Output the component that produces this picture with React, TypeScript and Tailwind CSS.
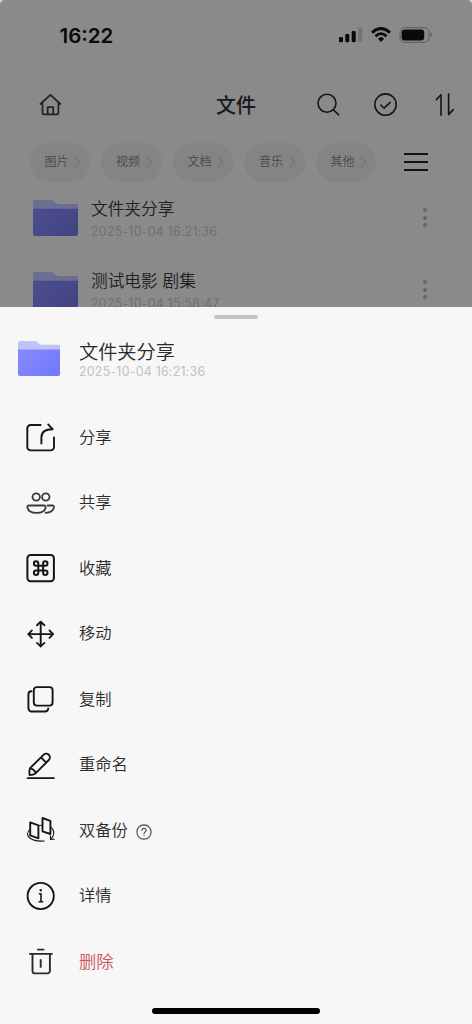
import type { ReactNode } from "react";

const filters = ['图片', '视频', '文档', '音乐', '其他']

const files = [
    { name: '文件夹分享', date: '2025-10-04 16:21:36' },
    { name: '测试电影 剧集', date: '2025-10-04 15:58:47' },
]

const Icon = (props: { children: ReactNode, color?: string, width?: number }) => {
    const { children, color = '#161616', width = 1.9 } = props
    return (
        <svg width="30" height="30" viewBox="0 0 30 30" fill="none" stroke={color} strokeWidth={width} strokeLinecap="round" strokeLinejoin="round" className="shrink-0">
            {children}
        </svg>
    )
}

const ShareIcon = () => (
    <Icon>
        <path d="M14.6 3H4.6a3.3 3.3 0 0 0-3.3 3.3v18.8a3.3 3.3 0 0 0 3.3 3.3h20.1a3.3 3.3 0 0 0 3.3-3.3v-9.6" />
        <path d="M15.4 21.5v-6c0-5 3.6-8.3 11.2-8.3L22.2 2.4" />
    </Icon>
)

const PeopleIcon = () => (
    <Icon color="#3a3a3a" width={1.8}>
        <circle cx="10.2" cy="9" r="3.7" />
        <circle cx="19.8" cy="9" r="3.7" />
        <path d="M3 17.5h15.2c1 0 1.6.7 1.5 1.7-.5 3.9-4.2 5.7-9.1 5.7s-8.7-1.9-9.2-5.7c-.1-1 .6-1.7 1.6-1.7Z" />
        <path d="M21.7 17.5h4.8c1 0 1.6.7 1.5 1.7-.5 3.6-3.6 5.4-8.3 5.7" />
    </Icon>
)

const CollectIcon = () => (
    <Icon>
        <rect x="1.4" y="2" width="26.5" height="26.3" rx="3.2" strokeWidth="2" />
        <path d="M12.3 12.7v-2.2a2.2 2.2 0 1 0-2.2 2.2h9.2a2.2 2.2 0 1 0-2.2-2.2v9.2a2.2 2.2 0 1 0 2.2-2.2h-9.2a2.2 2.2 0 1 0 2.2 2.2Z" strokeWidth="2" />
    </Icon>
)

const MoveIcon = () => (
    <Icon>
        <path d="M14.7 3v24.2M2.6 15.1h24.2" />
        <path d="M11 6.3 14.7 2.8l3.7 3.5M11 23.9l3.7 3.5 3.7-3.5M5.9 11.4 2.4 15.1l3.5 3.7M23.5 11.4l3.5 3.7-3.5 3.7" />
    </Icon>
)

const CopyIcon = () => (
    <Icon>
        <rect x="7.8" y="3.1" width="18.8" height="18.5" rx="3" />
        <path d="M5.5 7.3a3.2 3.2 0 0 0-3.1 3.2v13.8a3.2 3.2 0 0 0 3.2 3.2H19a3.2 3.2 0 0 0 3.2-3" />
    </Icon>
)

const RenameIcon = () => (
    <Icon>
        <path d="M1.6 28.1h26.3" />
        <path d="m4.1 18.2 13.4-13.4a3.7 3.7 0 0 1 5.3 5.2L9.8 23.2c-1.5 1.2-4 1.9-6.2 1.9-.3-2.3-.4-5 .5-6.9ZM15 7.4l5.2 5.3M4.2 18.2c2.2.4 5.1 2.6 5.5 5" />
    </Icon>
)

const BackupIcon = () => (
    <Icon>
        <path d="M4.2 7.4v13l8.2 2.9V10.3ZM16.5 3v13.3l7.9 2.7V5.9Z" />
        <path d="M12.6 10.5l3.7-.3" strokeWidth="1" />
        <path d="M3.8 14.6C.6 17.1.7 20.8 4.2 23.3c3 2.2 8.5 3.2 14 2.7M25 12.4c4 3.2 3.5 8.6-.2 11.5M24.4 20.8v3.6l3.8-.2" strokeWidth="1.1" />
    </Icon>
)

const InfoIcon = () => (
    <Icon>
        <circle cx="14.7" cy="15" r="13.1" />
        <path d="M12.8 12.7h2.2v7.9M12.6 20.8h4.6" strokeWidth="1.6" strokeLinecap="butt" />
        <circle cx="14.7" cy="9.3" r=".6" strokeWidth="1.2" />
    </Icon>
)

const TrashIcon = () => (
    <Icon color="#2a2a2a">
        <path d="M11.9 3.6h5.6M3.9 7.9h22M6.5 8v16.9a2.5 2.5 0 0 0 2.5 2.5h12.4a2.5 2.5 0 0 0 2.5-2.5V8M14.7 14v6.9" />
    </Icon>
)

const actions = [
    { label: '分享', icon: <ShareIcon /> },
    { label: '共享', icon: <PeopleIcon /> },
    { label: '收藏', icon: <CollectIcon /> },
    { label: '移动', icon: <MoveIcon /> },
    { label: '复制', icon: <CopyIcon /> },
    { label: '重命名', icon: <RenameIcon /> },
    { label: '双备份', icon: <BackupIcon />, help: true },
    { label: '详情', icon: <InfoIcon /> },
    { label: '删除', icon: <TrashIcon />, danger: true },
]

const Folder = (props: { back: string, front: string, side: string, id: string, className: string }) => {
    const { back, front, side, id, className } = props
    return (
        <svg viewBox="0 0 45 37" preserveAspectRatio="none" className={className}>
            <defs>
                <linearGradient id={id} x1="0" y1="0" x2="1" y2=".6">
                    <stop offset="0" stopColor={side} />
                    <stop offset="1" stopColor={front} />
                </linearGradient>
            </defs>
            <path d="M0 2Q0 0 2 0H17.5Q19.5 0 21 1.4L23 3.2Q24 4 26 4H44Q45 4 45 5V20H0Z" fill={back} />
            <path d="M0 9H45V35Q45 37 43 37H2Q0 37 0 35Z" fill={`url(#${id})`} />
        </svg>
    )
}

const StatusBar = () => {
    return (
        <div className="flex h-[70px] items-center justify-between pl-[59.5px] pr-[39px]">
            <span className="pt-0.5 text-[20.5px] font-semibold leading-none text-[#0a0a0a]">16:22</span>
            <div className="flex items-center text-[#0a0a0a]">
                <svg width="24" height="16" viewBox="0 0 24 16" fill="currentColor">
                    <rect x="0" y="10" width="4" height="5.3" rx="1.2" />
                    <rect x="6.3" y="7" width="4" height="8.3" rx="1.2" />
                    <rect x="12.7" y="4" width="4" height="11.3" rx="1.2" />
                    <rect x="19.2" y=".6" width="4" height="14.7" rx="1.2" fill="#747474" />
                </svg>
                <svg width="20" height="16" viewBox="0 0 20 16" fill="none" stroke="currentColor" strokeWidth="2.8" className="ml-2">
                    <path d="M1 5.6Q10-2.5 19 5.6M4.4 9.2Q10 4 15.6 9.2" />
                    <path d="M6.9 11.7Q10 9 13.1 11.7L10 15Z" fill="currentColor" stroke="none" />
                </svg>
                <svg width="34" height="16" viewBox="0 0 34 16" className="ml-2">
                    <rect x="1" y=".7" width="29" height="14.6" rx="4.6" fill="none" stroke="#5c5c5c" />
                    <rect x="2.6" y="2.4" width="22.6" height="11.2" rx="3.3" fill="currentColor" />
                    <path d="M31.5 5.5q3 2.2 0 4.8Z" fill="#5c5c5c" />
                </svg>
            </div>
        </div>
    )
}

const Header = () => {
    return (
        <div className="grid h-[70px] grid-cols-[177px_40px_1fr] items-center pl-[39px] pr-[17px]">
            <svg width="24" height="24" viewBox="0 0 24 24" fill="none" stroke="#242424" strokeWidth="1.8" strokeLinejoin="round" strokeLinecap="round">
                <path d="M1.4 11 11.4 1.9 21.4 11M3.5 9.4v10.4q0 1.6 1.6 1.6h12.7q1.6 0 1.6-1.6V9.4" />
                <path d="M8.7 21v-6.8h5.5V21" />
            </svg>
            <h1 className="whitespace-nowrap pt-0.5 text-[20px] font-medium leading-none text-[#191919]">文件</h1>
            <div className="flex items-center justify-end">
                <svg width="24" height="24" viewBox="0 0 24 24" fill="none" stroke="#151515" strokeWidth="1.6" strokeLinecap="round">
                    <circle cx="11" cy="10.2" r="9" />
                    <path d="m17.5 16.7 5.2 5.2" />
                </svg>
                <svg width="24" height="24" viewBox="0 0 24 24" fill="none" stroke="#151515" strokeWidth="1.6" strokeLinecap="round" className="ml-[34px]">
                    <circle cx="11.5" cy="11.6" r="10.7" />
                    <path d="m6.8 12 3.3 3.2 6.1-5.8" />
                </svg>
                <svg width="20" height="24" viewBox="0 0 20 24" fill="none" stroke="#151515" strokeWidth="1.6" strokeLinecap="round" strokeLinejoin="round" className="ml-[37px]">
                    <path d="M1.4 6.6 6 1.8v20.5M13.6.8v20.8l4.6-5" />
                </svg>
            </div>
        </div>
    )
}

export default function App() {
    return (
        <div className="h-[1024px] w-[472px] overflow-hidden bg-[#d0d0d0] font-['Inter','Noto_Sans_CJK_SC',sans-serif]">
            <div className="h-[307px] overflow-hidden rounded-t-[5px] bg-[#8a8a8a]">
                <StatusBar />
                <Header />
                <div className="flex h-[42px] items-center pl-[29.5px] pt-0.5">
                    <div className="flex gap-[11px]">
                        {filters.map((item) => (
                            <div key={item} className="flex h-[39px] w-[60.5px] items-center gap-[5.5px] rounded-full bg-[#848484] pl-[15px] text-[12px] font-[350] leading-none text-[#484848]">
                                {item}
                                <svg width="7" height="12" viewBox="0 0 7 12" fill="none" stroke="#747474" strokeWidth="1.1">
                                    <path d="m1 1 5 5-5 5" />
                                </svg>
                            </div>
                        ))}
                    </div>
                    <div className="ml-[28px] flex w-[24px] flex-col gap-[6px]">
                        <div className="h-[1.7px] bg-[#121212]" />
                        <div className="h-[1.7px] bg-[#121212]" />
                        <div className="h-[1.7px] bg-[#121212]" />
                    </div>
                </div>
                <div className="pt-[17px]">
                    {files.map((file, i) => (
                        <div key={file.name} className="flex h-[72px] items-start pl-[33px] pr-[45px]">
                            <Folder id={`row${i}`} back="#6b6d91" side="#4b4d90" front="#434583" className="mt-px h-[36px] w-[45px]" />
                            <div className="ml-[13px]">
                                <p className="pt-px text-[16.7px] font-[350] leading-[19px] text-[#202020]">{file.name}</p>
                                <p className="mt-[6px] text-[12.4px] leading-[14px] tracking-[0.24px] text-[#707070]">{file.date}</p>
                            </div>
                            <div className="ml-auto mt-[9px] flex flex-col gap-[3.6px]">
                                <i className="size-1 rounded-full bg-[#676767]" />
                                <i className="size-1 rounded-full bg-[#676767]" />
                                <i className="size-1 rounded-full bg-[#676767]" />
                            </div>
                        </div>
                    ))}
                </div>
            </div>
            <div className="flex h-[717px] flex-col bg-[#f7f7f7]">
                <div className="mx-auto mt-2 h-[3.5px] w-[44px] rounded-full bg-[#c3c3c3]" />
                <div className="mt-[22px] flex h-[63.9px] items-start pl-[18px]">
                    <Folder id="sheet" back="#c0c2fa" side="#888bff" front="#7279fb" className="h-[35px] w-[42px]" />
                    <div className="ml-[19px]">
                        <h2 className="text-[19.2px] font-[350] leading-[22px] text-[#282828]">文件夹分享</h2>
                        <p className="pt-px text-[12.4px] leading-[16px] tracking-[0.24px] text-[#c2c2c2]">2025-10-04 16:21:36</p>
                    </div>
                </div>
                {actions.map((item) => (
                    <div key={item.label} className="flex h-[65.5px] shrink-0 items-center pl-[26px]">
                        {item.icon}
                        <span className={`ml-[23px] font-[350] leading-none ${item.danger ? 'pt-px text-[17.3px] text-[#cb5257]' : 'text-[16.3px] text-[#2c2c2c]'}`}>{item.label}</span>
                        {item.help && (
                            <svg width="16" height="16" viewBox="0 0 16 16" fill="none" stroke="#444444" strokeWidth="1.1" strokeLinecap="round" className="ml-[8px] mt-[3px]">
                                <circle cx="8" cy="8" r="7.1" />
                                <path d="M5.9 6.3a2.1 2.1 0 1 1 3.2 1.8Q8 8.7 8 9.6M8 11.6v.2" />
                            </svg>
                        )}
                    </div>
                ))}
                <div className="mx-auto mt-[14.6px] h-[6px] w-[168px] shrink-0 rounded-full bg-black" />
            </div>
        </div>
    )
}
